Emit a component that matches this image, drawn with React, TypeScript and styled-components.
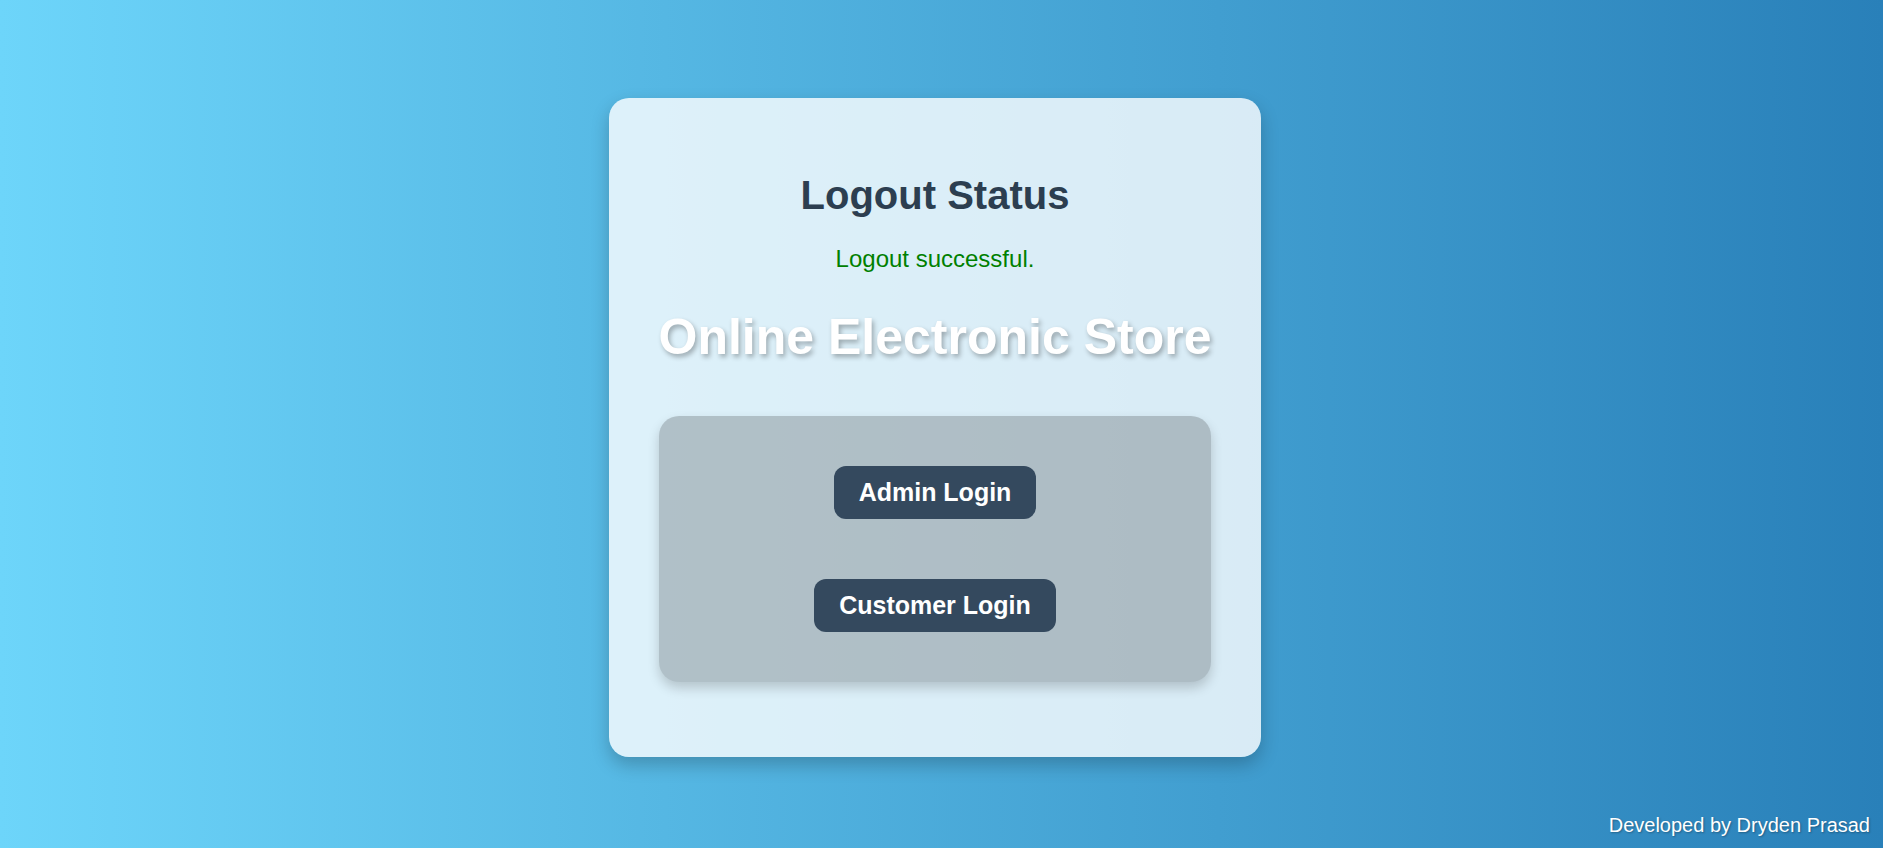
import React from "react";
import styled, { createGlobalStyle } from "styled-components";

const GlobalStyle = createGlobalStyle`
  html, body {
    margin: 0;
    padding: 0;
  }
  body {
    font-family: "Liberation Sans", Arial, sans-serif;
  }
  * { box-sizing: border-box; }
`;

const Page = styled.div`
  min-height: 100vh;
  display: flex;
  flex-direction: column;
  background: linear-gradient(to right, #6dd5fa, #2980b9);
`;

const Main = styled.main`
  flex: 1;
  display: flex;
  justify-content: center;
  align-items: flex-start;
  padding: 98px 13px 0 0;
`;

const Card = styled.section`
  width: 652px;
  padding: 75px 50px;
  background: rgba(255, 255, 255, 0.8);
  border-radius: 20px;
  box-shadow: 0 8px 18px rgba(0, 0, 0, 0.22);
  display: flex;
  flex-direction: column;
  align-items: center;
  text-align: center;
`;

const Title = styled.h2`
  margin: 0;
  font-size: 40px;
  line-height: 45px;
  font-weight: 700;
  color: #2c3e50;
`;

const Message = styled.p`
  margin: 27px 0 0;
  font-size: 24px;
  line-height: 27px;
  color: #008000;
`;

const StoreName = styled.h1`
  margin: 37px 0 0;
  font-size: 50px;
  line-height: 57px;
  font-weight: 700;
  white-space: nowrap;
  color: #ffffff;
  text-shadow: 2px 3px 5px rgba(0, 0, 0, 0.3);
`;

const LoginBox = styled.div`
  align-self: stretch;
  margin-top: 50px;
  padding: 50px 0;
  background: rgba(0, 0, 0, 0.2);
  border-radius: 20px;
  box-shadow: 0 6px 12px rgba(0, 0, 0, 0.18);
  display: flex;
  flex-direction: column;
  align-items: center;
  gap: 60px;
`;

const LoginButton = styled.a`
  display: inline-block;
  padding: 13px 25px;
  font-size: 25px;
  line-height: 27px;
  font-weight: 700;
  color: #ffffff;
  background: #34495e;
  border-radius: 12px;
  text-decoration: none;
  cursor: pointer;
`;

const Footer = styled.footer`
  text-align: right;
  padding: 0 13px 11px;
  font-size: 20px;
  line-height: 23px;
  color: #ffffff;
  text-shadow: 1px 1px 2px rgba(0, 0, 0, 0.3);
`;

export default function App() {
  return (
    <>
      <GlobalStyle />
      <Page>
        <Main>
          <Card>
            <Title>Logout Status</Title>
            <Message>Logout successful.</Message>
            <StoreName>Online Electronic Store</StoreName>
            <LoginBox>
              <LoginButton href="#">Admin Login</LoginButton>
              <LoginButton href="#">Customer Login</LoginButton>
            </LoginBox>
          </Card>
        </Main>
        <Footer>Developed by Dryden Prasad</Footer>
      </Page>
    </>
  );
}
